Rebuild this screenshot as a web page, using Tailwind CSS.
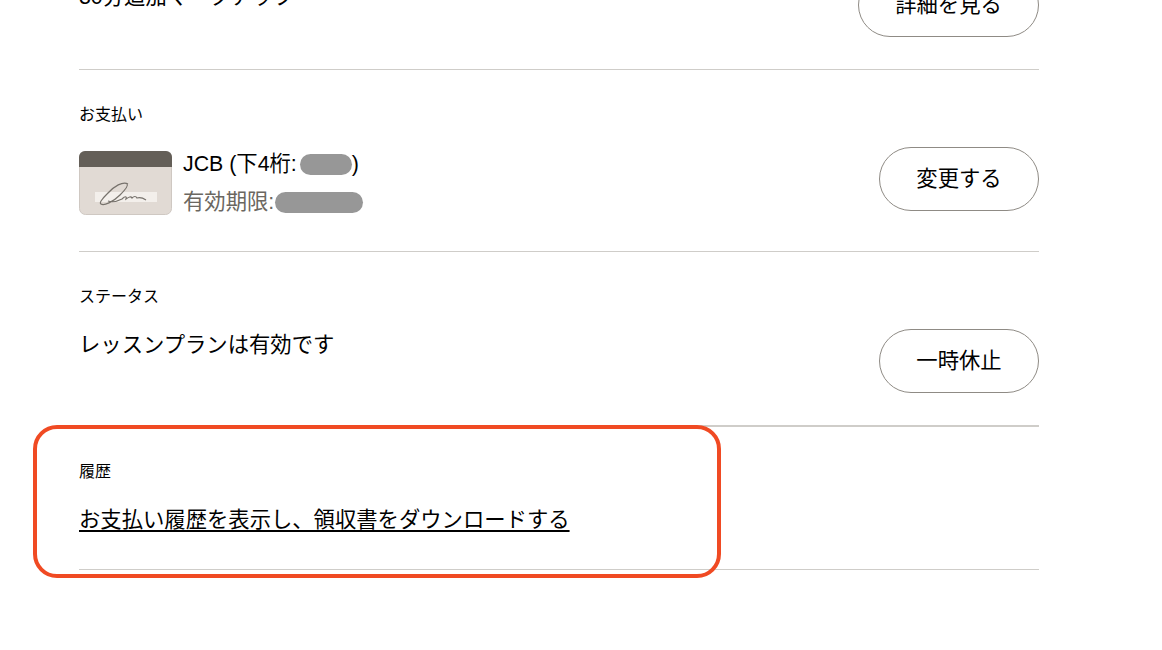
<!doctype html>
<html lang="ja">
<head>
<meta charset="utf-8">
<script src="https://cdn.jsdelivr.net/npm/@tailwindcss/browser@4"></script>
</head>
<body class="bg-white text-black font-['Liberation_Sans','Noto_Sans_CJK_JP',sans-serif]">
<div class="relative h-[650px] w-[1162px] overflow-hidden">
  <main class="ml-[79px] w-[960px] -mt-[27px]">
    <section class="flex h-[97px] items-start justify-between border-b border-[#cfcdc9]">
      <p class="pt-[8px] text-[21.33px] leading-[32px]">30分追加マークアップ</p>
      <a class="flex h-[64px] w-[181px] items-center justify-center rounded-full border border-[#8f8b85] pt-[2px] text-[21.33px]">詳細を見る</a>
    </section>
    <section class="h-[182px] border-b border-[#cfcdc9] pt-[35px]">
      <h2 class="text-[16px] leading-[20px]">お支払い</h2>
      <div class="mt-[22px] flex items-start justify-between">
        <div class="mt-[4px] flex items-center gap-[12px]">
          <svg class="h-[64px] w-[93px]" viewBox="0 0 93 64" aria-hidden="true">
            <rect x="0.5" y="0.5" width="92" height="63" rx="6" fill="#e1dad4" stroke="#cfc8c2"/>
            <path d="M0 16V6a6 6 0 0 1 6-6h81a6 6 0 0 1 6 6v10z" fill="#645f58"/>
            <rect x="16" y="41" width="62" height="10" fill="#f3efeb"/>
            <path d="M49 33c-5-3-14 2-21 10-5 5-8 9-6 10 3 2 12-2 19-9 4-4 9-9 7-11M29 50c5 2 10 0 14-2 3-3 5-3 4 0 3-2 5-3 6-1 2-2 4-2 5 0 3-1 6 0 9 2" fill="none" stroke="#77726c" stroke-width="1.2"/>
          </svg>
          <div class="-my-[3px] -ml-[1px]">
            <p class="flex h-[32px] items-center text-[21.33px] leading-[32px]">JCB (下4桁:<span class="ml-[3px] h-[21px] w-[52px] rounded-full bg-[#979797]"></span>)</p>
            <p class="mt-[6px] flex h-[32px] items-center text-[21.33px] leading-[32px] text-[#6b6761]">有効期限:<span class="ml-[1px] h-[21px] w-[88px] rounded-full bg-[#979797]"></span></p>
          </div>
        </div>
        <a class="flex h-[64px] w-[160px] items-center justify-center rounded-full border border-[#8f8b85] pt-[2px] text-[21.33px]">変更する</a>
      </div>
    </section>
    <section class="h-[175px] border-b-2 border-[#cfcdc9] pt-[35px]">
      <h2 class="text-[16px] leading-[20px]">ステータス</h2>
      <div class="mt-[22px] flex items-start justify-between">
        <p class="text-[21.33px] leading-[32px]">レッスンプランは有効です</p>
        <a class="flex h-[64px] w-[160px] items-center justify-center rounded-full border border-[#8f8b85] pt-[2px] text-[21.33px]">一時休止</a>
      </div>
    </section>
    <section class="h-[143px] border-b border-[#cfcdc9] pt-[35px]">
      <h2 class="text-[16px] leading-[20px]">履歴</h2>
      <a class="mt-[22px] inline-block text-[21.33px] leading-[32px] underline underline-offset-[3px]">お支払い履歴を表示し、領収書をダウンロードする</a>
    </section>
  </main>
  <div class="absolute left-[33px] top-[425px] h-[153px] w-[688px] rounded-[24px] border-4 border-[#f04a23]"></div>
</div>
</body>
</html>
